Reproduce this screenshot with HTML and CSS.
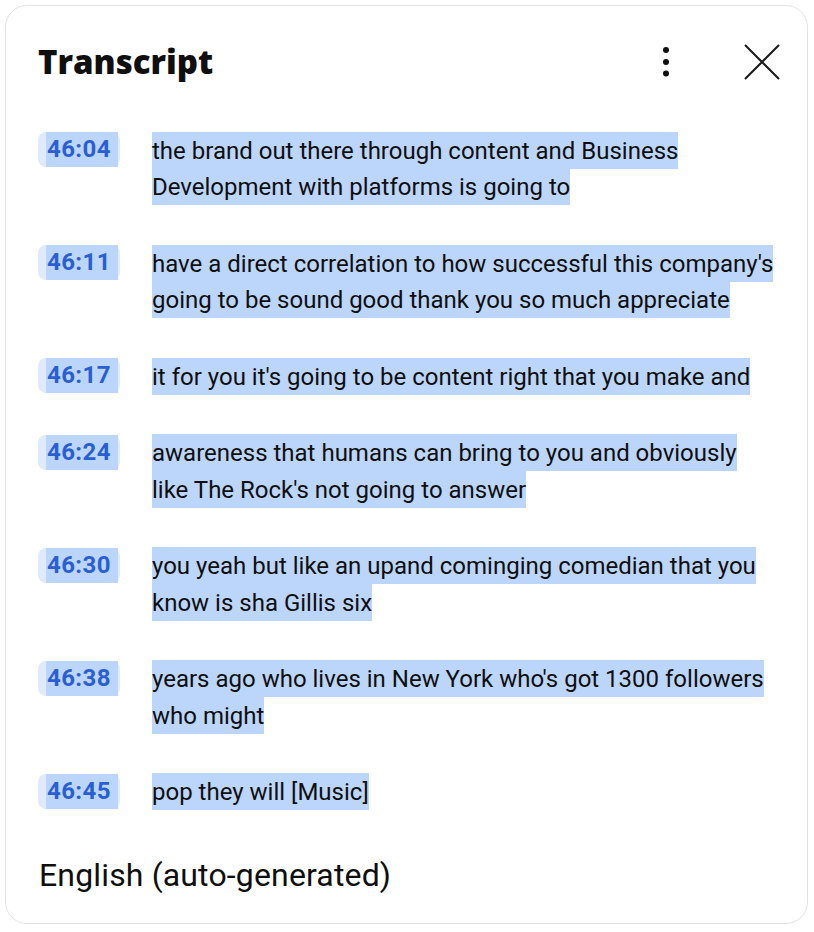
FILE: index.html
```html
<!DOCTYPE html>
<html lang="en">
<head>
<meta charset="utf-8">
<title>Transcript</title>
<link rel="stylesheet" href="styles.css">
</head>
<body>
<div class="panel">
  <div class="header">
    <h1 class="title">Transcript</h1>
    <div class="actions">
      <button class="icon-btn more" aria-label="More actions">
        <svg width="24" height="36" viewBox="0 0 24 36"><circle cx="12" cy="6" r="3"/><circle cx="12" cy="18" r="3"/><circle cx="12" cy="29.5" r="3"/></svg>
      </button>
      <button class="icon-btn close" aria-label="Close">
        <svg width="36" height="36" viewBox="0 0 36 36"><path d="M1 1 L35 35 M35 1 L1 35"/></svg>
      </button>
    </div>
  </div>
  <div class="segments">
    <div class="seg">
      <div class="chip"><span class="ts">46:04</span></div>
      <div class="txt"><span class="sel">the brand out there through content and Business Development with platforms is going to</span></div>
    </div>
    <div class="seg">
      <div class="chip"><span class="ts">46:11</span></div>
      <div class="txt"><span class="sel">have a direct correlation to how successful this company's going to be sound good thank you so much appreciate</span></div>
    </div>
    <div class="seg">
      <div class="chip"><span class="ts">46:17</span></div>
      <div class="txt"><span class="sel">it for you it's going to be content right that you make and</span></div>
    </div>
    <div class="seg">
      <div class="chip"><span class="ts">46:24</span></div>
      <div class="txt"><span class="sel">awareness that humans can bring to you and obviously like The Rock's not going to answer</span></div>
    </div>
    <div class="seg">
      <div class="chip"><span class="ts">46:30</span></div>
      <div class="txt"><span class="sel">you yeah but like an upand cominging comedian that you know is sha Gillis six</span></div>
    </div>
    <div class="seg">
      <div class="chip"><span class="ts">46:38</span></div>
      <div class="txt"><span class="sel">years ago who lives in New York who's got 1300 followers who might</span></div>
    </div>
    <div class="seg">
      <div class="chip"><span class="ts">46:45</span></div>
      <div class="txt"><span class="sel">pop they will [Music]</span></div>
    </div>
  </div>
  <div class="footer">English (auto-generated)</div>
</div>
</body>
</html>
```

FILE: styles.css
```css
* { box-sizing: border-box; }
html, body { margin: 0; padding: 0; background: #fff; }
body { font-family: Roboto, "Noto Sans", Arial, sans-serif; color: #0f0f0f; }

.panel {
  margin: 5px 0 0 5px;
  width: 803px;
  height: 919px;
  border: 1px solid #e3e3e3;
  border-radius: 22px;
  padding: 0 0 0 32px;
  display: flex;
  flex-direction: column;
}

.header {
  display: flex;
  align-items: center;
  justify-content: space-between;
  height: 120px;
  padding-top: 4px;
  padding-right: 27px;
}
.title {
  margin: 0;
  font-family: "Open Sans", Roboto, sans-serif;
  font-weight: 800;
  font-size: 33px;
  letter-spacing: 0;
  color: #0f0f0f;
  line-height: 40px;
  padding-left: 0;
  margin-top: -12px;
}
.actions { display: flex; align-items: center; gap: 66px; margin-top: -12px; }
.icon-btn {
  background: none; border: 0; padding: 0; margin: 0;
  display: flex; align-items: center; justify-content: center;
}
.more svg { fill: #0f0f0f; display: block; }
.close svg { stroke: #1a1a1a; stroke-width: 2; fill: none; display: block; }

.segments { display: flex; flex-direction: column; gap: 40px; margin-top: 6px; }
.seg { display: flex; align-items: flex-start; }
.chip {
  flex: none;
  width: 82px;
  height: 35px;
  background: #dfeafc;
  border-radius: 8px;
  padding: 0 2px 0 8px;
}
.ts {
  display: block;
  height: 35px;
  line-height: 35px;
  background: #bcd6fb;
  color: #2a5fd3;
  font-weight: 700;
  font-size: 24px;
  letter-spacing: 0.4px;
  padding-left: 1px;
}
.txt {
  margin-left: 32px;
  width: 624px;
  font-size: 24px;
  letter-spacing: 0;
  line-height: 36.5px;
  color: #0f0f0f;
}
.sel {
  background: #bcd6fb;
  padding: 4.5px 0;
}

.footer {
  margin-top: auto;
  margin-bottom: 30px;
  font-size: 32px;
  letter-spacing: 0.15px;
  line-height: 36px;
  color: #0f0f0f;
  padding-left: 1px;
}
```
